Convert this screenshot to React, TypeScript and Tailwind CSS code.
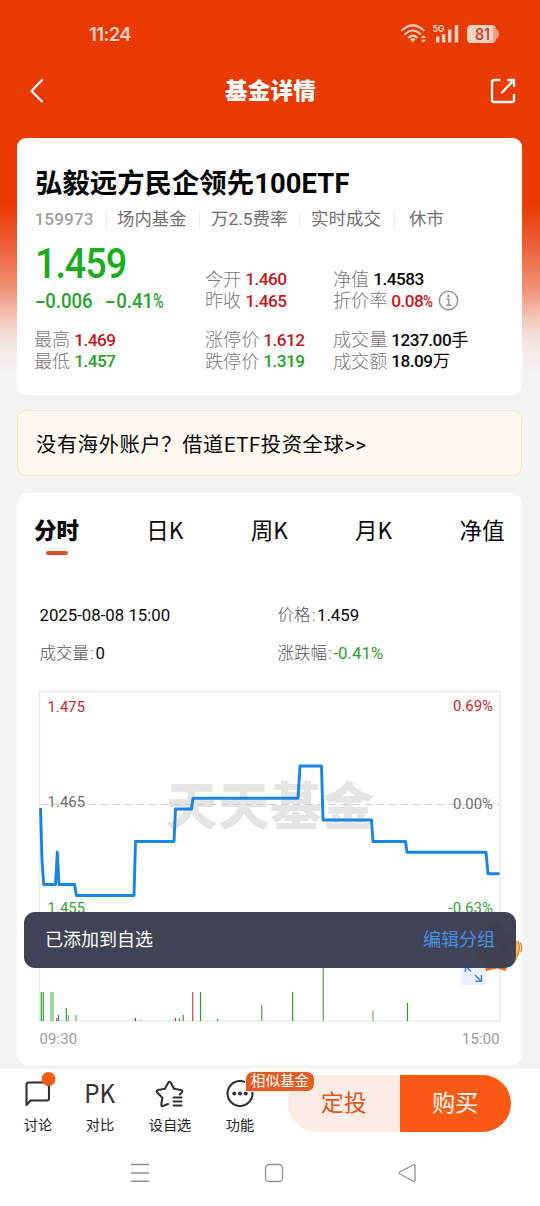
import React from "react";

const SANS = "font-[Roboto,'Noto_Sans_CJK_SC',sans-serif]";

function StatusBar() {
  return (
    <div className="flex h-[68px] items-center justify-between pl-[89px] pr-[39px]">
      <span className="origin-left scale-x-[0.97] text-[19px] font-semibold leading-none tracking-[-0.6px] text-[#fbd1c4] font-[Inter,sans-serif]">11:24</span>
      <svg width="102" height="24" viewBox="399 23 102 24" fill="none" stroke="#fbd1c4">
        <path d="M402 31.300 Q412.800 21.600 423.600 31.300 M405.200 35 Q412.800 28 420.400 35 M408.800 38.500 Q412.800 34.600 416.800 38.500" strokeWidth="2.100" strokeLinecap="round" />
        <path d="M410 40.200 Q412.800 37.800 415.600 40.200 L412.800 43.600 Z" fill="#fbd1c4" stroke="none" />
        <path d="M420.800 39 L423.400 36 L426 39 Z M420.800 40.800 L423.400 43.600 L426 40.800 Z" fill="#fbd1c4" stroke="none" />
        <path d="M437.700 37.500 V43.500 M443.600 35 V43.500 M449.700 30.500 V43.500 M456.500 26 V43.500" strokeWidth="3.500" />
        <text x="432.500" y="32.500" fontSize="9.400" fontWeight="700" fontFamily="Inter, sans-serif" fill="#fbd1c4" stroke="none" textLength="12" lengthAdjust="spacingAndGlyphs">5G</text>
        <path d="M490 26 h3 q3 0 3 4 q3 1 3 5 q0 4 -3 5 q0 4 -3 4 h-3 z" fill="#f29c80" stroke="none" />
        <path d="M471.500 26 H493 V44 H471.500 Q467 44 467 39.500 V30.500 Q467 26 471.500 26Z" fill="#fbd1c4" stroke="none" />
        <text x="475" y="40.700" fontSize="15.500" fontWeight="600" fontFamily="Inter, sans-serif" fill="#c4481f" stroke="none" textLength="15" lengthAdjust="spacingAndGlyphs">81</text>
      </svg>
    </div>
  );
}

function TitleBar() {
  return (
    <div className="flex h-[46px] items-center justify-between pl-[30px] pr-[24px]">
      <svg width="16" height="26" viewBox="0 0 16 26" fill="none" stroke="#fff" strokeWidth="2.2" strokeLinecap="round" strokeLinejoin="round">
        <path d="M12 2 L1.500 13 L12 23.500" />
      </svg>
      <h1 className="ml-[5px] text-[22.500px] font-black leading-none tracking-[0.2px] text-white">基金详情</h1>
      <svg width="26" height="26" viewBox="0 0 26 26" fill="none" stroke="#fff" strokeWidth="2.300" strokeLinecap="round" strokeLinejoin="round">
        <path d="M9.500 2 H4 Q2 2 2 4 V22 Q2 24 4 24 H22 Q24 24 24 22 V17 M18 2 H24 V8 M23.500 2.500 L12 14.500" />
      </svg>
    </div>
  );
}

type Tone = "red" | "green" | "black";
const tones: Record<Tone, string> = {
  red: "text-[#c8171b]",
  green: "text-[#27a22b]",
  black: "text-[#080808]",
};

function Stat({ label, value, tone, unit, children }: { label: string; value: string; tone: Tone; unit?: string; children?: React.ReactNode }) {
  return (
    <div className="flex h-[21.500px] items-center whitespace-nowrap leading-none">
      <span className="text-[18.200px] font-light tracking-[-0.1px] text-[#777]">{label}</span>
      <span className={`ml-[4px] text-[17.200px] font-medium tracking-[-0.5px] ${tones[tone]}`}>
        {value.replace("%", "")}
        {value.endsWith("%") && <span className="-mr-[2px] inline-block origin-left scale-x-[0.780]">%</span>}
        {unit && <span className="font-normal tracking-normal">{unit}</span>}
      </span>
      {children}
    </div>
  );
}

function FundCard() {
  return (
    <section className="ml-[17px] mr-[18px] mt-[24px] h-[257px] rounded-[9px] bg-white px-[18px] pt-[29px]">
      <h2 className="h-[34px] whitespace-nowrap text-[27.400px] font-bold leading-[34px] text-[#050505]">
        弘毅远方民企领先<span className="tracking-[0.1px]">100ETF</span>
      </h2>
      <div className="mt-[8px] flex h-[22px] items-center whitespace-nowrap text-[17.400px] leading-none text-[#707070]">
        <span className="w-[71px] text-[17.200px] font-medium tracking-[0.1px] text-[#a0a0a0]"><span className="-ml-[0.500px]">159973</span></span>
        <span className="w-[93px] border-l border-[#ececec] pl-[10px]">场内基金</span>
        <span className="w-[100px] border-l border-[#ececec] pl-[11px]">万2.5费率</span>
        <span className="w-[95px] border-l border-[#ececec] pl-[11px] tracking-[0.1px]">实时成交</span>
        <span className="border-l border-[#ececec] pl-[14px]">休市</span>
      </div>
      <div className="mt-[11px] grid grid-cols-[170px_129px_1fr]">
        <div className="h-[76px]">
          <div className="origin-left scale-x-[0.890] text-[42.500px] font-medium leading-[44px] tracking-[-1.200px] text-[#1bad20]">1.459</div>
          <div className="mt-[4px] flex text-[20px] font-medium leading-[22px] text-[#27a22b]">
            <span className="flex w-[70px] origin-left scale-x-[0.930] whitespace-nowrap"><span className="w-[11px]"><span className="inline-block origin-left scale-x-[1.700]">-</span></span>0.006</span>
            <span className="flex origin-left scale-x-[0.930] whitespace-nowrap"><span className="w-[12px]"><span className="inline-block origin-left scale-x-[1.700]">-</span></span>0.41<span className="inline-block origin-left scale-x-[0.750]">%</span></span>
          </div>
        </div>
        <div className="pt-[27px]">
          <Stat label="今开" value="1.460" tone="red" />
          <Stat label="昨收" value="1.465" tone="red" />
        </div>
        <div className="-ml-px pt-[27px]">
          <Stat label="净值" value="1.4583" tone="black" />
          <Stat label="折价率" value="0.08%" tone="red">
            <svg className="ml-[4px] mt-[-2px]" width="21" height="21" viewBox="0 0 21 21" fill="none" stroke="#999" strokeWidth="1.600">
              <circle cx="10.500" cy="10.500" r="9.200" />
              <path d="M8.500 9 H10.700 V15 M8 15.200 H13" />
              <circle cx="10.500" cy="6" r="1.400" fill="#999" stroke="none" />
            </svg>
          </Stat>
        </div>
        <div className="-ml-px pt-[11.500px]">
          <Stat label="最高" value="1.469" tone="red" />
          <Stat label="最低" value="1.457" tone="green" />
        </div>
        <div className="pt-[11.500px]">
          <Stat label="涨停价" value="1.612" tone="red" />
          <Stat label="跌停价" value="1.319" tone="green" />
        </div>
        <div className="-ml-px pt-[11.500px]">
          <Stat label="成交量" value="1237.00" unit="手" tone="black" />
          <Stat label="成交额" value="18.09" unit="万" tone="black" />
        </div>
      </div>
    </section>
  );
}

const line =
  "M40.500 808 L42 860 L43.700 884.500 H55.500 L57.300 852 L59 884.500 H74.500 L76.500 895.500 H134 L135.500 841.500 H174 L175.500 809 H191.500 L193 798.300 H298 L300 766 H321.500 L323 820 H371.500 L373 841.500 H405.500 L407 852.300 H486 L488 873.800 H499.500";

const volumes: [number, number, string][] = [
  [41.3, 992, "#2fa032"], [43.3, 992, "#2fa032"], [51, 992, "#63b966"], [53, 992, "#63b966"],
  [56.8, 1018, "#b8282a"], [58.6, 1015, "#2fa032"], [66.3, 1008, "#2fa032"], [68.3, 1015, "#63b966"],
  [76, 1015, "#63b966"], [135.4, 1018, "#b8282a"], [141, 1020, "#63b966"], [175.5, 1018, "#b8282a"],
  [179.5, 1018, "#2fa032"], [183.2, 1015, "#2fa032"], [192.7, 992, "#d0484c"], [200.5, 992, "#2b9a30"],
  [217.6, 1019, "#2fa032"], [261.8, 1005, "#4bad50"], [292.6, 992, "#2b9a30"], [323.2, 957, "#4bad50"],
  [373, 1011, "#63b966"], [407.5, 1003, "#2b9a30"],
];

function Chart() {
  return (
    <svg className="block" width="505" height="375" viewBox="17 680 505 375" fontFamily="Roboto, 'Noto Sans CJK SC', sans-serif" fontSize="14.800">
      <rect x="39.500" y="691.500" width="460.500" height="329.500" fill="none" stroke="#e9e9e9" strokeWidth="1.300" />
      <text x="166" y="825" fontSize="51.500" fontWeight="900" fill="#e5e5e5" fontFamily="'Noto Sans CJK SC', sans-serif" textLength="208">天天基金</text>
      <path d="M41 804.500 H499" stroke="#cfcfcf" strokeWidth="1.200" strokeDasharray="7.500 4.500" />
      <path d={line} fill="none" stroke="#1885e0" strokeWidth="2.900" strokeLinejoin="round" />
      <text x="47.500" y="712" fill="#c8282b" textLength="37.500">1.475</text>
      <text x="47.500" y="806.500" fill="#6e6e6e" textLength="37.500">1.465</text>
      <text x="47.500" y="913" fill="#36a238" textLength="37.500">1.455</text>
      <text x="453" y="710.500" fill="#c8282b" textLength="40" lengthAdjust="spacingAndGlyphs">0.69%</text>
      <text x="453" y="809" fill="#6e6e6e" textLength="40" lengthAdjust="spacingAndGlyphs">0.00%</text>
      <text x="448.500" y="913" fill="#36a238" textLength="44.500" lengthAdjust="spacingAndGlyphs">-0.63%</text>
      {volumes.map(([x, y, color]) => (
        <path key={x} d={`M${x} ${y} V1021`} stroke={color} strokeWidth="1.200" />
      ))}
      <text x="39.500" y="1044" fill="#999" textLength="37.500">09:30</text>
      <text x="462" y="1044" fill="#999" textLength="37.500">15:00</text>
      <rect x="461" y="960" width="25" height="25" rx="2" fill="#e8f1fd" />
      <path d="M465.500 972 V966 H471.500 M465.500 966 L471 971.500 M475 975 L481 981 M475.500 981.200 H481.400 V975" fill="none" stroke="#4183d0" strokeWidth="1.500" />
    </svg>
  );
}

function Mascot() {
  return (
    <svg width="62" height="54" viewBox="466 918 62 54" fill="none">
      <path d="M484 962 L497 967 L507 963 L505.500 971 L497 968.500 L486 971 Z" fill="#ee651f" />
      <ellipse cx="495" cy="947" rx="21" ry="18" fill="#f7a353" />
      <path d="M486 932 Q486 922 495 921 Q504 923 504 934" fill="#b94825" />
      <circle cx="485" cy="947" r="4" fill="#28386b" />
      <circle cx="505" cy="947" r="4" fill="#28386b" />
      <path d="M516.500 941 Q519 949 515.500 960" stroke="#f6b650" strokeWidth="2.400" />
      <path d="M518 941 Q521 948 517.500 956" stroke="#e66f2c" strokeWidth="1.300" />
      <path d="M520.500 942.500 Q522.700 948 520.500 952.500" stroke="#ec8134" strokeWidth="1.300" />
    </svg>
  );
}

function Toast() {
  return (
    <div className="absolute left-[24px] top-[912px] flex h-[55.500px] w-[492px] items-center justify-between rounded-[11px] bg-[#3b3f52]/[0.980] pl-[21px] pr-[21px] text-[18px] leading-none">
      <span className="text-white">已添加到自选</span>
      <span className="text-[#4b8fe2]">编辑分组</span>
    </div>
  );
}

function ChartCard() {
  return (
    <section className="ml-[17px] mr-[18px] mt-[17px] h-[572px] rounded-[11px] bg-white">
      <nav className="flex h-[66px] justify-between pl-[17px] pr-[17.500px] pt-[22.500px] text-[22.500px] leading-[26px] text-[#080808] font-['Noto_Sans_CJK_SC',sans-serif]">
        <div className="flex flex-col items-center">
          <span className="font-black">分时</span>
          <span className="mt-[9.500px] h-[4px] w-[22px] rounded-full bg-[#dc5420]" />
        </div>
        <span>日K</span>
        <span>周K</span>
        <span>月K</span>
        <span>净值</span>
      </nav>
      <div className="grid h-[121px] grid-cols-[238px_1fr] content-start gap-y-[14px] pl-[22.500px] pt-[45px] text-[16.800px] leading-[23.500px] text-[#080808]">
        <span>2025-08-08 15:00</span>
        <span><span className="text-[16.500px] font-light text-[#555]">价格<span className="px-[1.500px]">:</span></span>1.459</span>
        <span><span className="text-[16.500px] font-light text-[#555]">成交量<span className="px-[1.500px]">:</span></span>0</span>
        <span><span className="text-[16.500px] font-light text-[#555]">涨跌幅<span className="px-[1.500px]">:</span></span><span className="text-[#2aa22d]">-0.41%</span></span>
      </div>
      <Chart />
    </section>
  );
}

function Tool({ label, className, children }: { label: string; className: string; children: React.ReactNode }) {
  return (
    <div className={`flex shrink-0 flex-col items-center ${className}`}>
      <div className="flex h-[33px] items-end justify-center">{children}</div>
      <span className="mt-[8px] whitespace-nowrap text-[14.200px] leading-[18px] text-[#222]">{label}</span>
    </div>
  );
}

function BottomBar() {
  return (
    <div className="relative mt-[4px] flex h-[76px] bg-white pl-[3px] pt-[6px]">
      <Tool label="讨论" className="w-[70px]">
        <svg className="overflow-visible" width="26" height="28" viewBox="0 0 26 28" fill="none" stroke="#303133" strokeWidth="2.100" strokeLinejoin="round">
          <path d="M1.500 25 V4.500 Q1.500 2.500 3.500 2.500 H22 Q24 2.500 24 4.500 V18.500 Q24 20.500 22 20.500 H5.500 Z" />
          <circle cx="23.500" cy="-1" r="7" fill="#fb5a14" stroke="none" />
        </svg>
      </Tool>
      <Tool label="对比" className="w-[54px]">
        <span className="h-[32px] origin-center scale-x-[0.930] text-[26px] leading-[32px] text-[#303133] font-['Noto_Sans_CJK_SC',sans-serif]">PK</span>
      </Tool>
      <Tool label="设自选" className="w-[86px]">
        <svg width="30" height="30" viewBox="0 0 30 30" fill="none" stroke="#303133" strokeWidth="2.100" strokeLinejoin="round" strokeLinecap="round">
          <path d="M13 26 L8 28 Q6 28.500 6.300 26.500 L7.300 19.800 L2.200 14.500 Q1 12.700 3.200 12 L10 10.800 L13.300 4.600 Q14.500 3 15.700 4.600 L19 10.800 L25.800 12 Q28 12.700 26.800 14.500 L24.800 16.500" />
          <path d="M18.500 19.500 H26.500 M18.500 23.500 H26.500 M18.500 27.500 H26.500" strokeWidth="2" />
        </svg>
      </Tool>
      <Tool label="功能" className="w-[54px]">
        <svg width="28" height="28" viewBox="0 0 28 28" fill="none" stroke="#303133" strokeWidth="2.100">
          <circle cx="14" cy="13.500" r="12.500" />
          <g fill="#303133" stroke="none"><circle cx="8.300" cy="13.500" r="2" /><circle cx="14" cy="13.500" r="2" /><circle cx="19.700" cy="13.500" r="2" /></g>
        </svg>
      </Tool>
      <div className="ml-[21px] flex h-[57px] w-[223px] shrink-0 overflow-hidden rounded-full text-[23px] leading-[57px]">
        <span className="w-[111.500px] bg-[#fdece5] text-center text-[#dc5923]">定投</span>
        <span className="w-[111.500px] bg-[#fb5a14] text-center text-white">购买</span>
      </div>
      <span className="absolute left-[245px] top-[1.500px] h-[21px] w-[70px] rounded-[8px] rounded-bl-none border border-[#fff1e9] bg-[#e25d25] text-center text-[14.600px] leading-[19px] text-white">相似基金</span>
    </div>
  );
}

function SystemNav() {
  return (
    <div className="flex h-[61px] justify-between bg-white pl-[130px] pr-[123px] pt-[18px]">
      <svg width="20" height="20" viewBox="0 0 20 20" fill="none" stroke="#929292" strokeWidth="1.400"><path d="M1 1.500 H19 M1 10 H19 M1 18.200 H19" /></svg>
      <svg width="20" height="20" viewBox="0 0 20 20" fill="none" stroke="#929292" strokeWidth="1.300"><rect x="1.500" y="1.500" width="17" height="17" rx="3.500" /></svg>
      <svg width="20" height="20" viewBox="0 0 20 20" fill="none" stroke="#929292" strokeWidth="1.300" strokeLinejoin="round"><path d="M2.800 9 L16.300 1.800 Q18 1.200 18 3 V17 Q18 18.800 16.300 18.200 L2.800 11 Q1.500 10 2.800 9Z" /></svg>
    </div>
  );
}

export default function App() {
  return (
    <main className={`relative h-[1206px] w-[540px] overflow-hidden bg-[#f4f4f4] bg-[linear-gradient(180deg,#e93a03_0px,#e93a03_205px,#ec5a30_240px,#f08c70_285px,#f3c9bd_320px,#f4e4df_340px,#f4f4f4_375px)] ${SANS}`}>
      <StatusBar />
      <TitleBar />
      <FundCard />
      <section className="ml-[17px] mr-[18px] mt-[15px] flex h-[66px] items-center rounded-[9px] border border-[#f8eab8] bg-[#fdf8f0] pl-[18px] pt-[4px] text-[20.300px] leading-none text-[#080808]">
        <span className="whitespace-nowrap tracking-[0.600px]">没有海外账户？借道ETF投资全球&gt;&gt;</span>
      </section>
      <ChartCard />
      <BottomBar />
      <SystemNav />
      <div className="absolute left-[466px] top-[918px]"><Mascot /></div>
      <Toast />
    </main>
  );
}
